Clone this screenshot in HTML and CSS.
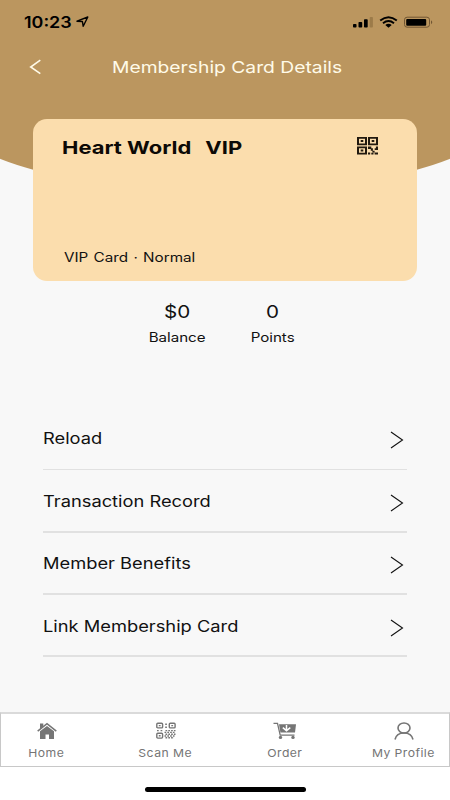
FILE: index.html
```html
<!DOCTYPE html>
<html lang="en">
<head>
<meta charset="utf-8">
<title>Membership Card Details</title>
<link rel="stylesheet" href="styles.css">
</head>
<body>
<svg width="0" height="0" class="defs">
  <symbol id="chevron" viewBox="0 0 14 18"><path d="M1 1 12.5 9 1 17" fill="none" stroke="#111" stroke-width="1.1"/></symbol>
</svg>
<div class="screen">
  <header class="top">
    <div class="status">
      <span class="clock"><span class="wide">10:23</span></span>
      <svg class="arrow" width="13" height="12" viewBox="0 0 13 12"><path d="M1 5.2 11.8 1 7.2 10.3 6.4 5.5Z" fill="none" stroke="#000" stroke-width="1.4" stroke-linejoin="round"/></svg>
      <svg class="signals" width="82" height="13" viewBox="0 0 82 13">
        <rect x="1" y="8" width="3.5" height="3.5" rx=".8"/><rect x="6.5" y="6" width="3.7" height="5.5" rx=".8"/><rect x="12" y="3.2" width="3.7" height="8.3" rx=".8"/><rect x="17.7" y="1" width="3.2" height="10.5" rx=".8" fill="#9c7b49"/>
        <path d="M28.2 4.6Q36.5-2.2 44.8 4.6M31 7.2Q36.5 2.8 42 7.2" fill="none" stroke="#000" stroke-width="1.9"/><path d="M33.3 8.9Q36.5 6.7 39.7 8.9L36.5 11.7Z"/>
        <rect x="52.5" y="1.2" width="25" height="10" rx="2.6" fill="none" stroke="#715633" stroke-width="1"/><rect x="54.2" y="2.9" width="20" height="6.8" rx="1"/><path d="M79 4.3Q81.5 6.2 79 8.2Z" fill="#715633"/>
      </svg>
    </div>
    <div class="titlebar">
      <svg class="back" width="13" height="16" viewBox="0 0 13 16"><path d="M11.3 1.2 1.7 8l9.6 6.7" fill="none" stroke="#fffbe9" stroke-width="1.6"/></svg>
      <h1><span class="wide">Membership Card Details</span></h1>
    </div>
  </header>

  <section class="card">
    <div class="card-head">
      <h2><span class="wide">Heart World<span class="level">VIP</span></span></h2>
      <svg width="21" height="18" viewBox="0 0 21 18" fill="#21190f">
        <path fill-rule="evenodd" d="M0 0h10v8.2H0ZM2 1.7v4.8h6V1.7ZM11 0h10v8.2H11ZM13 1.7v4.8h6V1.7ZM0 9.5h10v8H0ZM2 11.2v4.6h6v-4.6Z"/>
        <path d="M3.7 3.1h2.6v2H3.7ZM14.7 3.1h2.6v2h-2.6ZM3.7 12.5h2.6v2H3.7ZM11 9.5h3.3v1.7h1.6v2.6h1.7v1.7h-2.2v-1.7h-1.6v-1.7H11ZM18.9 9.5H21v3.4h-3.3v-1.7h1.2ZM11 15.4h2.2v2.1H11ZM14.3 15.8h2.2v1.7h-2.2ZM17.6 15.4H21v2.1h-3.4Z"/>
      </svg>
    </div>
    <p class="tier"><span class="wide">VIP Card · Normal</span></p>
  </section>

  <section class="stats">
    <div class="stat"><b><span class="wide">$0</span></b><span class="wide">Balance</span></div>
    <div class="stat"><b><span class="wide">0</span></b><span class="wide">Points</span></div>
  </section>

  <ul class="menu">
    <li><span class="wide">Reload</span><svg width="14" height="18"><use href="#chevron"/></svg></li>
    <li><span class="wide">Transaction Record</span><svg width="14" height="18"><use href="#chevron"/></svg></li>
    <li><span class="wide">Member Benefits</span><svg width="14" height="18"><use href="#chevron"/></svg></li>
    <li><span class="wide">Link Membership Card</span><svg width="14" height="18"><use href="#chevron"/></svg></li>
  </ul>

  <nav class="tabs">
    <div class="tab">
      <svg width="20" height="18" viewBox="0 0 20 18" fill="#757575"><path d="M3 1.5h3.3v3L3 7ZM10 4l7 5.3V17h-5v-4.500H8.5V17H3V9.300Z"/><path d="M.7 9.2 10 1.7l9.3 7.500" fill="none" stroke="#757575" stroke-width="1.6"/></svg>
      <span class="wide">Home</span>
    </div>
    <div class="tab">
      <svg width="20" height="18" viewBox="0 0 20 18" fill="none" stroke="#757575" stroke-width="1.4">
        <rect x=".8" y="1.3" width="5.8" height="4.6" rx="1"/><rect x="13.3" y="1.3" width="5.8" height="4.6" rx="1"/><rect x=".8" y="11.3" width="5.8" height="4.8" rx="1"/>
        <path d="M2.8 3.6h1.8M15.3 3.6h1.8M2.8 13.7h1.8M9.2 2.2h1.7M9.2 5.2h1.7M1 8.6h1.7M4.6 8.6h1.7"/>
        <path d="M9.5 8.6h10M8.5 10.4h10M9.5 12.2h10M8.5 14h10M9.5 15.8h8.5" stroke-dasharray="1.7 1.1"/>
      </svg>
      <span class="wide">Scan Me</span>
    </div>
    <div class="tab">
      <svg width="24" height="18" viewBox="0 0 24 18" fill="#757575"><path d="M6 2.2h17L22 10.5H7.4Z"/><path d="M.5 1.4h4L7.2 13.2h14.3" fill="none" stroke="#757575" stroke-width="1.3"/><circle cx="7.5" cy="15.4" r="1.7"/><circle cx="20" cy="15.4" r="1.7"/><path d="M13.5 3v5.5M9.8 5.7l3.7 3 3.8-3" fill="none" stroke="#fff" stroke-width="1.5"/></svg>
      <span class="wide">Order</span>
    </div>
    <div class="tab">
      <svg width="20" height="18" viewBox="0 0 20 18" fill="none" stroke="#757575" stroke-width="1.6"><ellipse cx="10" cy="6" rx="6" ry="5"/><path d="M1 17.5C2 13 5.5 11 10 11s8 2 9 6.5"/></svg>
      <span class="wide">My Profile</span>
    </div>
  </nav>
  <footer class="home-area"><div class="indicator"></div></footer>
</div>
</body>
</html>
```

FILE: styles.css
```css
* { box-sizing: border-box; }
body { margin: 0; font-family: Inter, "Liberation Sans", sans-serif; color: #111; }
h1, h2, p, ul { margin: 0; padding: 0; }
svg { display: block; flex: none; }
.defs { position: absolute; }
.screen { width: 450px; height: 800px; overflow: hidden; background: #f8f8f8; display: flex; flex-direction: column; position: relative; }

/* Wide letterforms */
.wide { display: inline-block; white-space: nowrap; transform: scaleX(1.18); transform-origin: left center; }

.top { height: 119px; flex: none; }
.top::before { content: ""; position: absolute; left: -45px; top: 0; width: 540px; height: 191px; border-radius: 0 0 50% 50% / 0 0 72px 72px; background: #bb965f; }
.status { position: relative; display: flex; align-items: center; height: 44px; padding: 0 16px 0 24px; }
.clock { width: 52px; font-size: 16px; font-weight: 600; line-height: 20px; color: #000; }
.clock .wide { transform: scaleX(1.12); }
.signals { margin-left: auto; }
.titlebar { position: relative; display: flex; align-items: center; height: 46px; padding-left: 29px; }
h1 { margin-left: 70px; font-size: 16.5px; font-weight: 400; line-height: 20px; color: #fffbe9; }
h1 .wide { transform: scaleX(1.168); }

.card { position: relative; flex: none; margin: 0 33px; height: 162px; border-radius: 14px; background: #fbddad; padding: 18px 39px 0 28.5px; display: flex; flex-direction: column; }
.card-head { display: flex; justify-content: space-between; height: 20px; }
h2 { padding-top: 1px; font-size: 18px; font-weight: 700; line-height: 20px; color: #0c0906; }
h2 .wide { transform: scaleX(1.22); }
.level { margin-left: 11.5px; }
.tier { margin: 92px 0 0 2px; font-size: 12.5px; line-height: 18px; word-spacing: .8px; }
.tier .wide { transform: scaleX(1.22); }

.stats { display: flex; justify-content: center; gap: 21px; height: 119px; padding-top: 20px; }
.stat { width: 75px; display: flex; flex-direction: column; align-items: center; font-size: 12.8px; line-height: 18px; }
.stat b { font-size: 17.5px; font-weight: 400; line-height: 22px; margin-bottom: 5.5px; }
.stat .wide, .tab .wide { transform-origin: center; }

.menu { flex: none; margin: 8px 43px 0; list-style: none; }
.menu li { display: flex; justify-content: space-between; align-items: center; height: 62.3px; padding: 8px 3px 3px 0; border-bottom: 2px solid #e1e1e1; font-size: 15.5px; line-height: 20px; }
.menu li:first-child { padding-top: 6px; border-bottom-width: 1px; }
.menu .wide { margin-top: -2px; }

.tabs { flex: none; margin-top: 54.8px; height: 55px; border: 1px solid #c8c8c8; border-top: 2px solid #dadada; background: #fff; display: flex; justify-content: space-between; padding: 8px 0 0; }
.tab { width: 91px; display: flex; flex-direction: column; align-items: center; font-size: 11px; line-height: 14px; letter-spacing: .4px; color: #757575; }
.tab .wide { margin-top: 6px; transform: scaleX(1.11); }
.home-area { flex: 1; background: #fff; display: flex; justify-content: center; padding-top: 20px; }
.indicator { width: 161px; height: 5px; border-radius: 3px; background: #000; }
```
